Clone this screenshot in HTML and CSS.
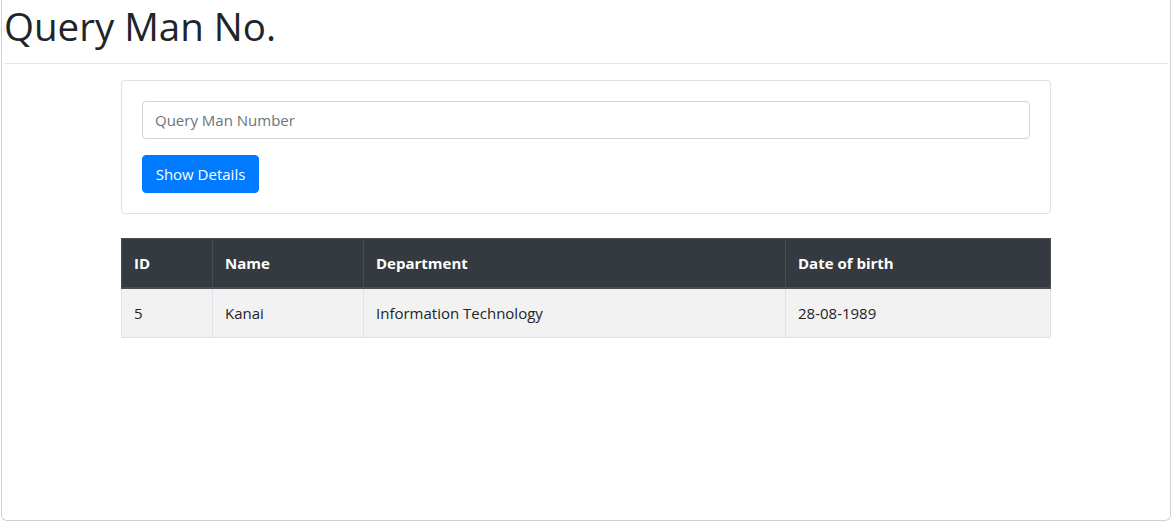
FILE: index.html
```html
<!DOCTYPE html>
<html lang="en">
<head>
<meta charset="utf-8">
<title>Query Man No.</title>
<link rel="stylesheet" href="styles.css">
</head>
<body>
<div class="frame">
  <h1 class="title">Query Man No.</h1>
  <hr class="rule">
  <div class="container">
    <div class="card">
      <div class="card-body">
        <input class="form-control" type="text" placeholder="Query Man Number">
        <button class="btn" type="button">Show Details</button>
      </div>
    </div>
    <table class="table">
      <colgroup>
        <col class="c-id"><col class="c-name"><col class="c-dept"><col class="c-dob">
      </colgroup>
      <thead>
        <tr><th>ID</th><th>Name</th><th>Department</th><th>Date of birth</th></tr>
      </thead>
      <tbody>
        <tr><td>5</td><td>Kanai</td><td>Information Technology</td><td>28-08-1989</td></tr>
      </tbody>
    </table>
  </div>
</div>
</body>
</html>
```
FILE: styles.css
```css
* { box-sizing: border-box; }
html, body { margin: 0; padding: 0; background: #fff; }
body {
  font-family: "Open Sans", "Noto Sans", "Liberation Sans", sans-serif;
  font-size: 16px;
  line-height: 1.5;
  color: #212529;
}
.frame {
  margin-left: 1px;
  width: 1170px;
  height: 521px;
  border: 1px solid #cfd2dc;
  border-top: none;
  border-radius: 0 0 6px 6px;
  padding: 0 2px;
  overflow: hidden;
}
.title {
  margin: 0;
  padding-top: 2px;
  font-size: 38.5px;
  font-weight: 400;
  line-height: 48px;
}
.rule {
  margin: 13px 0 16px;
  border: 0;
  border-top: 1px solid #e5e5e5;
  height: 0;
}
.container {
  width: 930px;
  margin: 0 auto;
}
.card {
  border: 1px solid #dfdfdf;
  border-radius: 4px;
}
.card-body {
  padding: 20px;
  display: flex;
  flex-direction: column;
  align-items: flex-start;
  gap: 16px;
}
.form-control {
  width: 100%;
  height: 38px;
  padding: 6px 12px;
  font: inherit;
  font-size: 15px;
  color: #495057;
  border: 1px solid #ced4da;
  border-radius: 4px;
  background: #fff;
}
.form-control::placeholder { color: #6c757d; }
.btn {
  height: 38px;
  width: 117px;
  padding: 0;
  font: inherit;
  font-size: 15px;
  color: #fff;
  background: #007bff;
  border: 1px solid #007bff;
  border-radius: 4px;
}
.table {
  width: 929px;
  margin-top: 24px;
  border-collapse: collapse;
  table-layout: fixed;
  font-size: 15px;
}
.c-id { width: 91px; }
.c-name { width: 151px; }
.c-dept { width: 422px; }
.c-dob { width: 265px; }
.table th, .table td {
  padding: 12px;
  text-align: left;
  line-height: 24px;
}
.table th {
  background: #343a40;
  color: #fff;
  font-weight: 700;
  border: 1px solid #454d55;
  border-bottom-width: 2px;
}
.table td {
  background: #f2f2f2;
  border: 1px solid #dee2e6;
}
```
